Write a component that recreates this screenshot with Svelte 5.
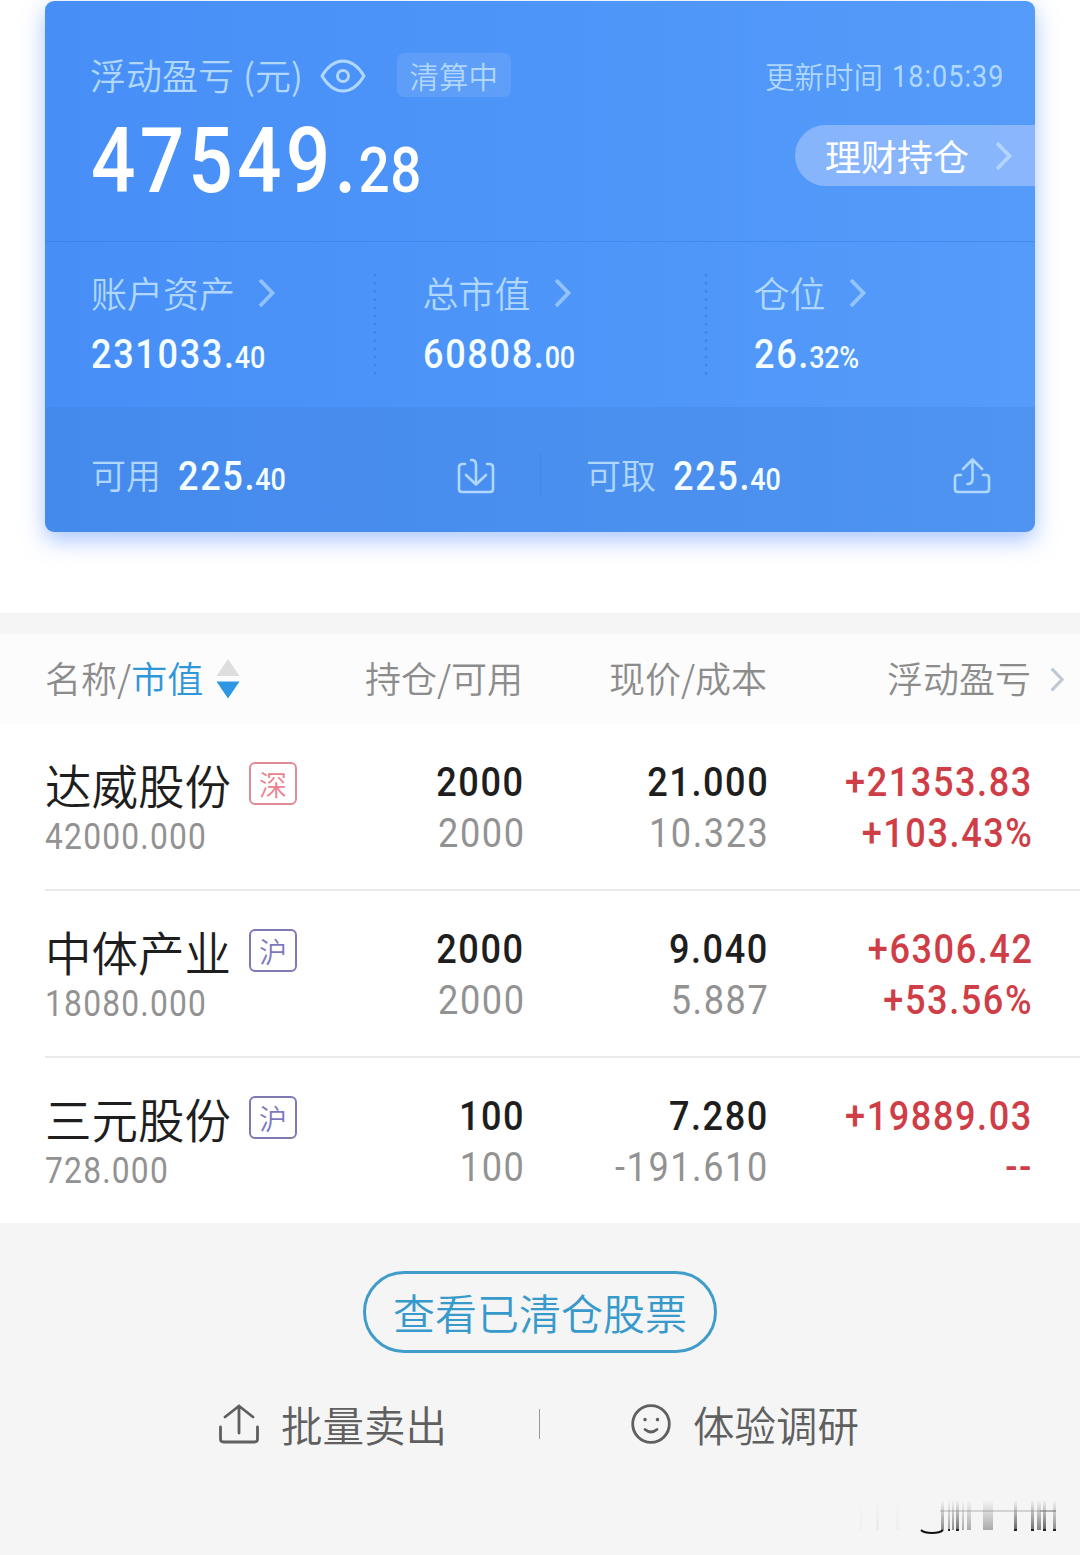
<script>
  const resumen = [
    { label: '账户资产', entero: '231033.', decimal: '40' },
    { label: '总市值', entero: '60808.', decimal: '00' },
    { label: '仓位', entero: '26.', decimal: '32%' }
  ];

  const acciones = [
    { name: '达威股份', market: '深', value: '42000.000', held: '2000', free: '2000', price: '21.000', cost: '10.323', profit: '+21353.83', rate: '+103.43%' },
    { name: '中体产业', market: '沪', value: '18080.000', held: '2000', free: '2000', price: '9.040', cost: '5.887', profit: '+6306.42', rate: '+53.56%' },
    { name: '三元股份', market: '沪', value: '728.000', held: '100', free: '100', price: '7.280', cost: '-191.610', profit: '+19889.03', rate: '--' }
  ];

  // x, width and opacity of each stripe of the faded mark
  const stripes = [
    [20, 2, 0.03], [36, 3, 0.05], [56, 3, 0.03], [101, 3, 0.5], [108, 2, 0.4], [112, 2, 0.5],
    [116, 3, 0.65], [122, 2, 0.35], [127, 4, 0.35], [143, 10, 0.35], [174, 3, 0.7],
    [191, 3, 0.65], [197, 4, 0.55], [203, 3, 0.7], [213, 3, 0.5]
  ];
</script>

{#snippet chevron()}
  <svg class="chevron" width="18" height="30" viewBox="0 0 18 30" fill="none" stroke="currentColor" stroke-width="3.8">
    <path d="M2 2l12.500 13L2 28" />
  </svg>
{/snippet}

<div class="page">
  <section class="card">
    <div class="top">
      <div class="title-row">
        <span class="title">浮动盈亏<span class="unit">(元)</span></span>
        <svg class="eye" width="46" height="34" viewBox="0 0 46 34" fill="none" stroke="currentColor" stroke-width="3">
          <path d="M2 17C8 7 15 2 23 2s15 5 21 15C38 27 31 32 23 32S8 27 2 17z" stroke-linejoin="round" />
          <circle cx="23" cy="17" r="5.5" />
        </svg>
        <span class="status">清算中</span>
        <span class="time">更新时间 <b>18:05:39</b></span>
      </div>
      <div class="total-row">
        <div class="total">47549.<small>28</small></div>
        <div class="pill"><span>理财持仓</span>{@render chevron()}</div>
      </div>
    </div>

    <div class="stats">
      {#each resumen as item}
        <div class="stat">
          <div class="stat-label"><span>{item.label}</span>{@render chevron()}</div>
          <div class="amount">{item.entero}<small>{item.decimal}</small></div>
        </div>
      {/each}
    </div>

    <div class="cash">
      <div class="cash-item">
        <span class="cash-label">可用</span>
        <span class="amount">225.<small>40</small></span>
        <svg width="38" height="36" viewBox="0 0 38 36" fill="none" stroke="currentColor" stroke-width="2.6" stroke-linecap="round" stroke-linejoin="round">
          <path d="M8 6H5.5Q2 6 2 9.500V31q0 3 3 3h28q3 0 3-3V9.500Q36 6 32.500 6H30" />
          <path d="M14 2q5-.5 5 5v19M9 17l10 9.500L29 17" />
        </svg>
      </div>
      <div class="cash-item">
        <span class="cash-label">可取</span>
        <span class="amount">225.<small>40</small></span>
        <svg width="38" height="36" viewBox="0 0 38 36" fill="none" stroke="currentColor" stroke-width="2.6" stroke-linecap="round" stroke-linejoin="round">
          <path d="M8 17H5q-3 0-3 3v11q0 3 3 3h28q3 0 3-3V20q0-3-3-3h-3" />
          <path d="M14.500 26q5 0 5-5V2M10 11l9.500-9.500L29 11" />
        </svg>
      </div>
    </div>
  </section>

  <section class="holdings">
    <div class="grid head">
      <div class="name-head">
        <span>名称/<em>市值</em></span>
        <svg width="24" height="40" viewBox="0 0 24 40">
          <path d="M12 0l11.500 17H.5z" fill="#dedede" />
          <path d="M.5 22.500h23L12 39.500z" fill="#2f96e3" />
        </svg>
      </div>
      <div>持仓/可用</div>
      <div>现价/成本</div>
      <div>浮动盈亏</div>
      {@render chevron()}
    </div>

    {#each acciones as accion}
      <article class="grid row">
        <div class="stock">
          <div class="stock-name">{accion.name}<span class="market" class:sz={accion.market === '深'}>{accion.market}</span></div>
          <div class="stock-value">{accion.value}</div>
        </div>
        <div class="pair"><span>{accion.held}</span><span class="muted">{accion.free}</span></div>
        <div class="pair"><span>{accion.price}</span><span class="muted">{accion.cost}</span></div>
        <div class="pair up"><span>{accion.profit}</span><span>{accion.rate}</span></div>
      </article>
    {/each}
  </section>

  <footer class="footer">
    <button class="cleared">查看已清仓股票</button>
    <div class="actions">
      <div class="action">
        <svg width="40" height="40" viewBox="0 0 40 40" fill="none" stroke="currentColor" stroke-width="2.8" stroke-linecap="round" stroke-linejoin="round">
          <path d="M1.500 23v12q0 3 3 3h31q3 0 3-3V23M20 29V2M6 13L20 2l14 11" />
        </svg>
        <span>批量卖出</span>
      </div>
      <i class="bar"></i>
      <div class="action">
        <svg width="40" height="40" viewBox="0 0 40 40" fill="none" stroke="currentColor" stroke-width="2.8" stroke-linecap="round">
          <circle cx="20" cy="20" r="18.300" />
          <path d="M14 25.500q6 5 12 0" />
          <path d="M14 15.500v.1M26.500 15.500v.1" stroke-width="3.600" />
        </svg>
        <span>体验调研</span>
      </div>
    </div>

    <svg class="mark" width="220" height="40" viewBox="0 0 220 40">
      <defs>
        <linearGradient id="fade" x1="0" y1="0" x2="0" y2="1">
          <stop offset="0" stop-color="#222" stop-opacity="0" />
          <stop offset="1" stop-color="#222" />
        </linearGradient>
      </defs>
      {#each stripes as [x, width, opacity]}
        <rect {x} y="2" {width} height="30" fill="url(#fade)" {opacity} />
      {/each}
      <path d="M81 32q3 3 11 3t11-3" fill="none" stroke="#111" stroke-width="2" />
      <path d="M100 13h116" stroke="#777" stroke-width="1.500" opacity=".35" />
      <path d="M200 13h16" stroke="#777" stroke-width="1.500" opacity=".5" />
      <path d="M174 32h3M191 32h3M203 32h3M213 32h3M108 32h2M116 32h3" stroke="#222" stroke-width="2" />
    </svg>
  </footer>
</div>

<style>
  :global(body) {
    margin: 0;
    background: #fff;
  }

  .page {
    width: 1080px;
    height: 1555px;
    overflow: hidden;
    display: flex;
    flex-direction: column;
    font-family: "Noto Sans CJK SC", sans-serif;
    font-weight: 350;
    font-size: 36px;
    white-space: nowrap;
  }

  .chevron {
    flex: none;
  }

  .card {
    height: 531px;
    margin: 1px 45px 81px;
    border-radius: 9px;
    background: linear-gradient(90deg, #478ff7, #549bfa);
    box-shadow: 0 8px 22px rgba(84, 140, 255, 0.5);
    color: #b0d7fd;
    flex: none;
  }

  .top {
    box-sizing: border-box;
    height: 241px;
    padding: 52px 0 0 46px;
    border-bottom: 1px solid rgba(40, 110, 220, 0.3);
  }

  .title-row {
    display: flex;
    align-items: center;
    height: 44px;
    padding-right: 31px;
  }

  .title {
    line-height: 44px;
    margin: -2px 0 0 -1px;
  }

  .unit {
    margin-left: 9px;
  }

  .eye {
    margin: 2px 0 0 17px;
  }

  .status {
    margin-left: 31px;
    width: 114px;
    height: 44px;
    line-height: 44px;
    border-radius: 7px;
    background: rgba(255, 255, 255, 0.1);
    text-align: center;
    font-size: 29.5px;
  }

  .time {
    display: flex;
    align-items: center;
    margin-left: auto;
    font-size: 29.5px;
    line-height: 44px;
    gap: 9px;
  }

  /* figures are set narrow and spaced out */
  .time b,
  .total,
  .amount,
  .stock-value,
  .pair span {
    font-family: Roboto, sans-serif;
    transform: scaleX(0.87);
    transform-origin: left center;
  }

  .time b {
    width: 112px;
    margin-top: 4px;
    font-weight: 400;
    font-size: 31px;
    letter-spacing: 1.2px;
  }

  .total-row {
    display: flex;
    justify-content: space-between;
    align-items: flex-start;
    padding-top: 28px;
  }

  .total {
    width: 380px;
    font-weight: 500;
    font-size: 90px;
    line-height: 74px;
    letter-spacing: 4.8px;
    color: #fff;
  }

  .total small {
    margin-left: -2px;
    font-size: 63px;
    letter-spacing: 0.5px;
  }

  .pill {
    box-sizing: border-box;
    width: 240px;
    height: 61px;
    padding: 0 22px 0 30px;
    border-radius: 31px 0 0 31px;
    background: rgba(190, 210, 255, 0.5);
    color: #fff;
    font-weight: 400;
    display: flex;
    align-items: center;
    justify-content: space-between;
  }

  .pill span {
    line-height: 58px;
    margin-top: -1px;
  }

  .pill .chevron {
    color: #b4d5ff;
  }

  .stats {
    display: flex;
    height: 165px;
  }

  .stat {
    box-sizing: border-box;
    flex: none;
    width: 331px;
    padding: 28px 0 31px 46px;
    background: radial-gradient(circle, rgba(40, 105, 210, 0.4) 1px, transparent 1.8px) right 0 top 29px / 4px 8.2px repeat-y;
    background-clip: content-box;
  }

  .stat:first-child {
    width: 331.5px;
  }

  .stat:last-child {
    width: 327px;
    background: none;
  }

  .stat-label {
    display: flex;
    align-items: center;
    gap: 23px;
    height: 46px;
  }

  .stat-label span {
    margin-top: -3px;
  }

  .stat-label .chevron {
    opacity: 0.7;
  }

  .amount {
    font-weight: 500;
    font-size: 41.5px;
    line-height: 76px;
    letter-spacing: 1.9px;
    color: #f4fdff;
  }

  .amount small {
    margin-left: -1px;
    font-size: 31px;
    letter-spacing: -0.3px;
  }

  .cash {
    display: flex;
    height: 125px;
    background: rgba(60, 120, 200, 0.2);
    border-radius: 0 0 9px 9px;
  }

  .cash-item {
    box-sizing: border-box;
    width: 495px;
    padding: 12px 45px 0 46px;
    display: flex;
    align-items: center;
    height: 100%;
  }

  .cash-item .amount {
    margin: 5px auto 0 17px;
  }

  .cash-item + .cash-item {
    padding-right: 44px;
    background: linear-gradient(rgba(40, 105, 210, 0.25), rgba(40, 105, 210, 0.25)) 0 47px / 1px 42px no-repeat;
  }

  .cash-label {
    font-size: 35px;
    line-height: 50px;
    margin-top: -4px;
  }

  .holdings {
    border-top: 21px solid #f5f5f5;
    flex: none;
  }

  .grid {
    display: grid;
    grid-template-columns: 268px 210px 244px 264px 34px;
    margin-left: 45px;
    text-align: right;
  }

  .head {
    height: 90px;
    align-items: center;
    margin-left: 0;
    padding-left: 45px;
    background: #fcfcfc;
    color: #8c8c8c;
  }

  .head div {
    line-height: 50px;
    margin-top: -4px;
  }

  .head .chevron {
    width: 15px;
    height: 25px;
    justify-self: end;
    color: #bec9d4;
  }

  .head .name-head {
    display: flex;
    align-items: center;
    gap: 13px;
  }

  .name-head svg {
    margin-top: 4px;
  }

  .name-head em {
    font-style: normal;
    color: #2f96da;
  }

  .row {
    box-sizing: border-box;
    height: 167px;
    border-bottom: 2px solid #e9e9e9;
  }

  .row:last-child {
    height: 165px;
    border-bottom: none;
  }

  .stock {
    padding-top: 31px;
    text-align: left;
  }

  .stock-name {
    display: flex;
    align-items: center;
    height: 56px;
    font-size: 46.5px;
    color: #1e1e1e;
  }

  .market {
    box-sizing: border-box;
    width: 48px;
    height: 43px;
    margin: 0 0 0 18px;
    border: 2px solid #7c79b4;
    border-radius: 6px;
    text-align: center;
    font-size: 28px;
    line-height: 40px;
    color: #7c79c0;
  }

  .market.sz {
    border-color: #e08c98;
    color: #ec808e;
  }

  .stock-value {
    font-weight: 400;
    font-size: 36.5px;
    line-height: 51px;
    letter-spacing: 1.4px;
    color: #929292;
  }

  .pair {
    display: flex;
    flex-direction: column;
    align-items: flex-end;
    padding-top: 32px;
    font-weight: 500;
    font-size: 41.5px;
    line-height: 51px;
    letter-spacing: 1.8px;
    color: #1e1e1e;
  }

  .pair span {
    margin-right: -2px;
    transform-origin: right center;
  }

  .pair .muted {
    font-weight: 400;
    color: #929292;
  }

  .pair.up {
    color: #cf3e47;
  }

  .footer {
    flex: 1;
    position: relative;
    padding-top: 48px;
    background: #f5f5f5;
    text-align: center;
  }

  .cleared {
    box-sizing: border-box;
    width: 354px;
    height: 82px;
    padding: 0 0 2px;
    border: 3px solid #409dca;
    border-radius: 41px;
    background: none;
    font: inherit;
    font-size: 42px;
    color: #389acb;
    display: block;
    margin: 0 auto;
  }

  .actions {
    display: flex;
    align-items: center;
    height: 60px;
    margin-top: 41px;
    padding-left: 219px;
    font-size: 41.5px;
    color: #5f5f5f;
  }

  .action {
    display: flex;
    align-items: center;
    gap: 22px;
  }

  .bar {
    width: 1px;
    height: 30px;
    margin: 0 91px 0 92px;
    background: #999;
  }

  .mark {
    position: absolute;
    right: 20px;
    bottom: 17px;
  }
</style>
